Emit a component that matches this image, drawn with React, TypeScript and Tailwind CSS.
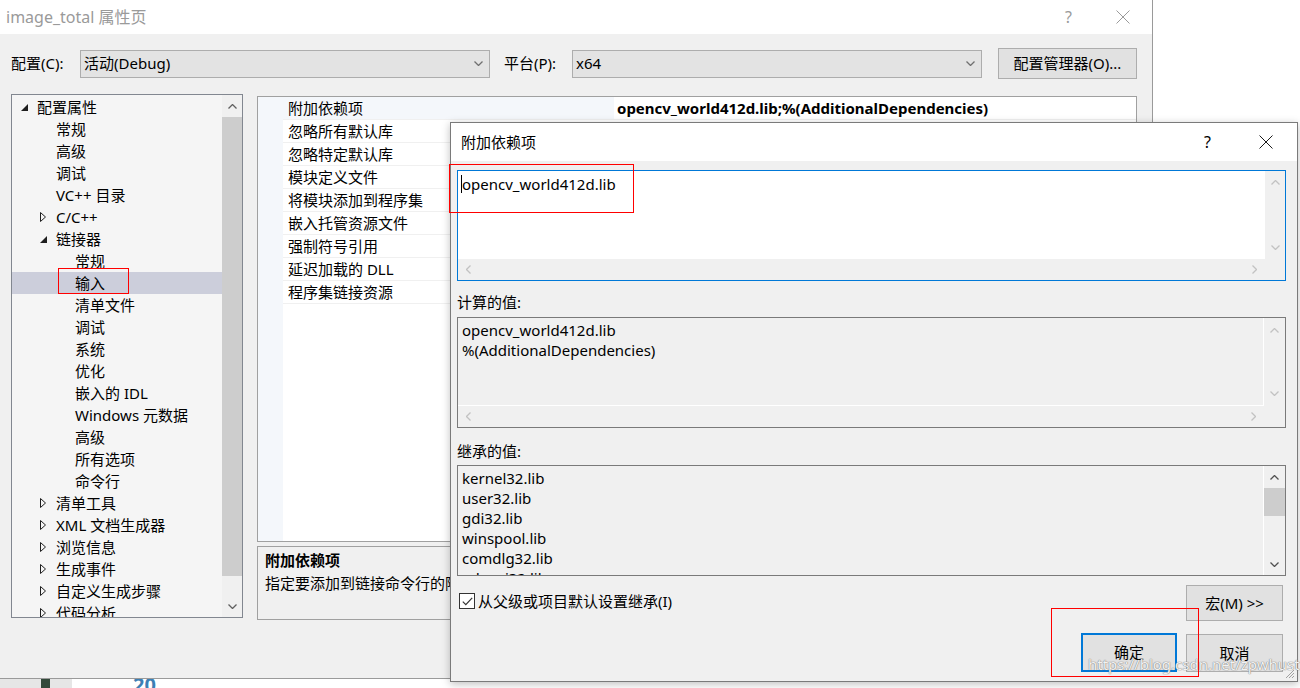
import React from 'react';

type Dir = 'up' | 'down' | 'left' | 'right';

function Chev({ d, c = '#606060' }: { d: Dir; c?: string }) {
  const v = d === 'up' || d === 'down';
  const path =
    d === 'up'
      ? 'M0.5 4.5L4.5 0.5L8.5 4.5'
      : d === 'down'
      ? 'M0.5 0.5L4.5 4.5L8.5 0.5'
      : d === 'left'
      ? 'M4.5 0.5L0.5 4.5L4.5 8.5'
      : 'M0.5 0.5L4.5 4.5L0.5 8.5';
  return (
    <svg width={v ? 9 : 5} height={v ? 5 : 9} viewBox={v ? '0 0 9 5' : '0 0 5 9'}>
      <path d={path} stroke={c} strokeWidth="1.3" fill="none" />
    </svg>
  );
}

function XIcon({ c, s = 14 }: { c: string; s?: number }) {
  return (
    <svg width={s} height={s} viewBox="0 0 14 14">
      <path d="M0.5 0.5L13.5 13.5M13.5 0.5L0.5 13.5" stroke={c} strokeWidth="1" fill="none" />
    </svg>
  );
}

type TreeItem = { t: string; l: number; e?: 'open' | 'closed'; sel?: boolean };

const tree: TreeItem[] = [
  { t: '配置属性', l: 0, e: 'open' },
  { t: '常规', l: 1 },
  { t: '高级', l: 1 },
  { t: '调试', l: 1 },
  { t: 'VC++ 目录', l: 1 },
  { t: 'C/C++', l: 1, e: 'closed' },
  { t: '链接器', l: 1, e: 'open' },
  { t: '常规', l: 2 },
  { t: '输入', l: 2, sel: true },
  { t: '清单文件', l: 2 },
  { t: '调试', l: 2 },
  { t: '系统', l: 2 },
  { t: '优化', l: 2 },
  { t: '嵌入的 IDL', l: 2 },
  { t: 'Windows 元数据', l: 2 },
  { t: '高级', l: 2 },
  { t: '所有选项', l: 2 },
  { t: '命令行', l: 2 },
  { t: '清单工具', l: 1, e: 'closed' },
  { t: 'XML 文档生成器', l: 1, e: 'closed' },
  { t: '浏览信息', l: 1, e: 'closed' },
  { t: '生成事件', l: 1, e: 'closed' },
  { t: '自定义生成步骤', l: 1, e: 'closed' },
  { t: '代码分析', l: 1, e: 'closed' },
];

const props = [
  '附加依赖项',
  '忽略所有默认库',
  '忽略特定默认库',
  '模块定义文件',
  '将模块添加到程序集',
  '嵌入托管资源文件',
  '强制符号引用',
  '延迟加载的 DLL',
  '程序集链接资源',
];

const inherited = ['kernel32.lib', 'user32.lib', 'gdi32.lib', 'winspool.lib', 'comdlg32.lib', 'advapi32.lib'];

function Expander({ e }: { e?: 'open' | 'closed' }) {
  if (e === 'open')
    return (
      <svg width="7" height="7" viewBox="0 0 7 7">
        <polygon points="7,0 7,7 0,7" fill="#1e1e1e" />
      </svg>
    );
  if (e === 'closed')
    return (
      <svg width="6" height="10" viewBox="0 0 6 10">
        <polygon points="0.5,0.5 5.5,5 0.5,9.5" fill="none" stroke="#1e1e1e" strokeWidth="1" />
      </svg>
    );
  return null;
}

export default function App() {
  return (
    <div className="relative w-[1300px] h-[688px] overflow-hidden bg-white font-['Noto_Sans','Noto_Sans_CJK_SC',sans-serif] text-[15px] text-black">
      <div className="flex h-full">
        {/* Main property window */}
        <div className="w-[1153px] flex flex-col">
          <div className="w-[1153px] h-[679px] flex flex-col border-r border-b border-[#9a9a9a]">
            {/* title bar */}
            <div className="h-[34px] bg-white flex items-center pl-[6px] text-[#9a9a9a] text-[16px]">
              <span>image_total 属性页</span>
              <span className="ml-auto mr-[44px] text-[16px] text-[#9a9a9a]">?</span>
              <span className="mr-[22px]"><XIcon c="#9a9a9a" /></span>
            </div>
            <div className="flex-1 bg-[#f0f0f0] flex flex-col">
              {/* config row */}
              <div className="mt-[14px] h-[31px] flex items-center pl-[11px]">
                <span className="w-[69px]">配置(C):</span>
                <div className="w-[410px] h-[28px] border border-[#adadad] bg-[#e3e3e3] flex items-center pl-[3px] pr-[6px]">
                  <span>活动(Debug)</span>
                  <span className="ml-auto"><Chev d="down" c="#707070" /></span>
                </div>
                <span className="ml-[14px] w-[68px]">平台(P):</span>
                <div className="w-[410px] h-[28px] border border-[#adadad] bg-[#e3e3e3] flex items-center pl-[3px] pr-[6px]">
                  <span>x64</span>
                  <span className="ml-auto"><Chev d="down" c="#707070" /></span>
                </div>
                <div className="ml-[16px] w-[139px] h-[31px] border border-[#adadad] bg-[#e1e1e1] flex items-center justify-center">
                  配置管理器(O)...
                </div>
              </div>
              {/* main area */}
              <div className="mt-[15px] flex pl-[11px]">
                {/* tree */}
                <div className="w-[232px] h-[524px] border border-[#828790] bg-[#f5f5f5] flex">
                  <div className="w-[210px] pt-px overflow-hidden">
                    {tree.map((it, i) => (
                      <div
                        key={i}
                        className={`h-[22px] flex items-center whitespace-nowrap ${it.sel ? 'bg-[#cccedb]' : ''}`}
                        style={{ paddingLeft: it.l * 19 }}
                      >
                        <span className="w-[25px] flex items-center pl-[9px]">
                          <Expander e={it.e} />
                        </span>
                        <span>{it.t}</span>
                      </div>
                    ))}
                  </div>
                  <div className="w-[20px] flex flex-col bg-[#f0f0f0]">
                    <div className="h-[22px] flex items-center justify-center"><Chev d="up" /></div>
                    <div className="h-[459px] bg-[#cdcdcd]" />
                    <div className="flex-1" />
                    <div className="h-[22px] flex items-center justify-center"><Chev d="down" /></div>
                  </div>
                </div>
                {/* right column */}
                <div className="ml-[14px] w-[880px] flex flex-col">
                  <div className="mt-[2px] h-[446px] border border-[#a0a0a0] bg-white flex">
                    <div className="w-[25px] bg-[#f4f7fb]" />
                    <div className="flex-1 flex flex-col">
                      {props.map((p, i) => (
                        <div key={i} className="h-[23px] flex items-center border-b border-[#f0f0f0]">
                          <div className={`w-[331px] h-full flex items-center pl-[5px] ${i === 0 ? 'bg-[#f4f7fb]' : ''}`}>{p}</div>
                          <div className="flex-1 pl-[3px] font-bold whitespace-nowrap">
                            {i === 0 ? 'opencv_world412d.lib;%(AdditionalDependencies)' : ''}
                          </div>
                        </div>
                      ))}
                    </div>
                  </div>
                  <div className="mt-[4px] h-[74px] border border-[#a0a0a0] bg-[#f0f0f0] pl-[7px] pt-[2px]">
                    <div className="font-bold h-[23px] leading-[23px]">附加依赖项</div>
                    <div className="h-[23px] leading-[23px] whitespace-nowrap">指定要添加到链接命令行的附加项。例如 kernel32.lib</div>
                  </div>
                </div>
              </div>
            </div>
          </div>
          {/* strip below window */}
          <div className="h-[9px] flex">
            <div className="w-[41px] bg-[#e6e6e6]" />
            <div className="w-[9px] bg-[#33493a]" />
            <div className="w-[22px] bg-[#e6e6e6]" />
            <div className="flex-1 bg-white overflow-hidden relative">
              <span className="absolute left-[61px] top-[-4px] text-[20px] leading-[20px] text-[#3d7fb4] font-bold">20</span>
            </div>
          </div>
        </div>
        <div className="flex-1 bg-white" />
      </div>

      {/* Dialog */}
      <div className="absolute left-[450px] top-[122px] w-[848px] h-[560px] border border-[#7a7a7a] bg-[#f0f0f0] flex flex-col shadow-[0_2px_8px_rgba(0,0,0,0.25)]">
        <div className="h-[38px] bg-white flex items-center pl-[10px]">
          <span>附加依赖项</span>
          <span className="ml-auto mr-[48px] text-[16px]">?</span>
          <span className="mr-[24px]"><XIcon c="#1a1a1a" /></span>
        </div>
        <div className="flex flex-col pl-[6px] pt-[9px] w-[835px]">
          {/* edit box */}
          <div className="h-[111px] border border-[#0078d7] flex flex-col">
            <div className="flex-1 flex">
              <div className="flex-1 bg-white pl-[3px] pt-[3px] leading-[20px] flex">
                <span className="inline-block w-px h-[18px] bg-black mt-[1px]" />
                <span>opencv_world412d.lib</span>
              </div>
              <div className="w-[20px] bg-[#f0f0f0] flex flex-col items-center justify-between py-[9px]">
                <Chev d="up" c="#c2c2c2" />
                <Chev d="down" c="#c2c2c2" />
              </div>
            </div>
            <div className="h-[21px] flex">
              <div className="flex-1 flex items-center justify-between px-[8px] bg-[#f0f0f0]">
                <Chev d="left" c="#c2c2c2" />
                <Chev d="right" c="#c2c2c2" />
              </div>
              <div className="w-[20px] bg-[#f0f0f0]" />
            </div>
          </div>

          <div className="mt-[11px] h-[20px] leading-[20px]">计算的值:</div>
          <div className="mt-[5px] h-[111px] border border-[#7a7a7a] flex flex-col">
            <div className="flex-1 flex">
              <div className="flex-1 pl-[4px] pt-[2px] leading-[20px] border-r border-b border-white">
                <div>opencv_world412d.lib</div>
                <div>%(AdditionalDependencies)</div>
              </div>
              <div className="w-[21px] flex flex-col items-center justify-between py-[10px]">
                <Chev d="up" c="#c2c2c2" />
                <Chev d="down" c="#c2c2c2" />
              </div>
            </div>
            <div className="h-[21px] flex">
              <div className="flex-1 flex items-center justify-between px-[8px]">
                <Chev d="left" c="#c2c2c2" />
                <Chev d="right" c="#c2c2c2" />
              </div>
              <div className="w-[21px]" />
            </div>
          </div>

          <div className="mt-[13px] h-[20px] leading-[20px]">继承的值:</div>
          <div className="mt-[4px] h-[111px] border border-[#7a7a7a] flex">
            <div className="flex-1 pl-[4px] pt-[2px] leading-[20px] overflow-hidden border-r border-white">
              {inherited.map((l) => (
                <div key={l}>{l}</div>
              ))}
            </div>
            <div className="w-[21px] flex flex-col">
              <div className="h-[22px] flex items-center justify-center"><Chev d="up" c="#505050" /></div>
              <div className="h-[28px] bg-[#cdcdcd]" />
              <div className="flex-1" />
              <div className="h-[22px] flex items-center justify-center"><Chev d="down" c="#505050" /></div>
            </div>
          </div>

          {/* bottom */}
          <div className="mt-[9px] flex items-start">
            <div className="flex items-center mt-[5px] ml-[2px]">
              <div className="w-[16px] h-[16px] border border-[#333] bg-white flex items-center justify-center">
                <svg width="11" height="9" viewBox="0 0 11 9">
                  <path d="M0.8 4.6L3.8 7.6L10.2 0.8" stroke="#333" strokeWidth="1.2" fill="none" />
                </svg>
              </div>
              <span className="ml-[3px]">从父级或项目默认设置继承(I)</span>
            </div>
            <div className="ml-auto mr-[3px] w-[97px] h-[36px] border border-[#adadad] bg-[#e1e1e1] flex items-center justify-center">
              宏(M) &gt;&gt;
            </div>
          </div>
          <div className="mt-[12px] flex justify-end items-start pr-[3px]">
            <div className="w-[96px] h-[39px] border-2 border-[#0078d7] bg-[#e1e1e1] flex items-center justify-center">确定</div>
            <div className="ml-[9px] mt-px w-[97px] h-[38px] border border-[#adadad] bg-[#e1e1e1] flex items-center justify-center">取消</div>
          </div>
        </div>
        <div className="absolute right-[2px] bottom-[2px]">
          <svg width="10" height="10" viewBox="0 0 10 10">
            <path d="M9 1L1 9M9 4L4 9M9 7L7 9" stroke="#a0a0a0" strokeWidth="1" />
          </svg>
        </div>
      </div>

      {/* annotations */}
      <div className="absolute left-[58px] top-[268px] w-[71px] h-[26px] border border-[#ff0000]" />
      <div className="absolute left-[449px] top-[164px] w-[185px] h-[49px] border border-[#ff0000]" />
      <div className="absolute left-[1051px] top-[608px] w-[148px] h-[69px] border border-[#ff0000]" />
      <div className="absolute left-[1088px] top-[654px] text-[15px] leading-[20px] text-white/90 [text-shadow:0_0_1px_#777,0_0_1px_#777] whitespace-nowrap">
        https://blog.csdn.net/zpwhust
      </div>
    </div>
  );
}
